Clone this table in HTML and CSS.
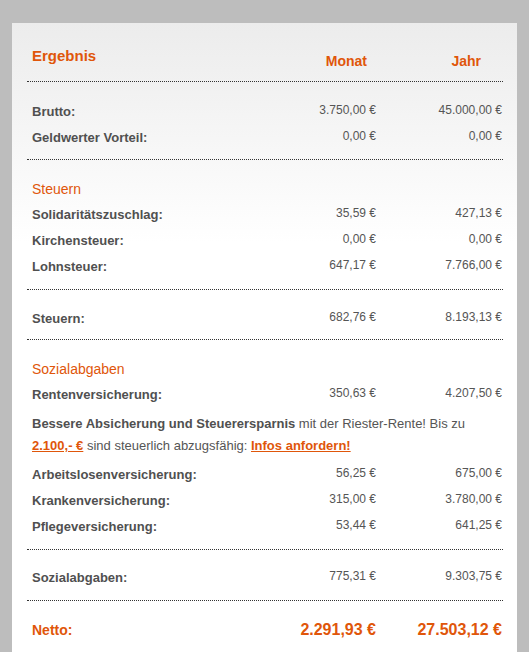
FILE: index.html
```html
<!DOCTYPE html>
<html lang="de">
<head>
    <meta charset="UTF-8">
    <meta name="viewport" content="width=device-width, initial-scale=1.0">
    <title>Ergebnis Brutto Netto</title>
    <link rel="stylesheet" href="styles.css">
</head>
<body>
    <div class="panel">
        <div class="row head">
            <div class="title">Ergebnis</div>
            <div class="col-head monat">Monat</div>
            <div class="col-head jahr">Jahr</div>
        </div>
        <hr class="dots first">

        <div class="block top">
            <div class="row"><div class="label">Brutto:</div><div class="val">3.750,00 €</div><div class="val">45.000,00 €</div></div>
            <div class="row"><div class="label">Geldwerter Vorteil:</div><div class="val">0,00 €</div><div class="val">0,00 €</div></div>
        </div>
        <hr class="dots">

        <div class="block">
            <h3 class="section">Steuern</h3>
            <div class="row"><div class="label">Solidaritätszuschlag:</div><div class="val">35,59 €</div><div class="val">427,13 €</div></div>
            <div class="row"><div class="label">Kirchensteuer:</div><div class="val">0,00 €</div><div class="val">0,00 €</div></div>
            <div class="row"><div class="label">Lohnsteuer:</div><div class="val">647,17 €</div><div class="val">7.766,00 €</div></div>
        </div>
        <hr class="dots">

        <div class="block sum">
            <div class="row"><div class="label">Steuern:</div><div class="val">682,76 €</div><div class="val">8.193,13 €</div></div>
        </div>
        <hr class="dots short">

        <div class="block">
            <h3 class="section">Sozialabgaben</h3>
            <div class="row"><div class="label">Rentenversicherung:</div><div class="val">350,63 €</div><div class="val">4.207,50 €</div></div>
            <p class="hint"><b>Bessere Absicherung und Steuerersparnis</b> mit der Riester-Rente! Bis zu <a href="#">2.100,- €</a> sind steuerlich abzugsfähig: <a href="#">Infos anfordern!</a></p>
            <div class="row"><div class="label">Arbeitslosenversicherung:</div><div class="val">56,25 €</div><div class="val">675,00 €</div></div>
            <div class="row"><div class="label">Krankenversicherung:</div><div class="val">315,00 €</div><div class="val">3.780,00 €</div></div>
            <div class="row"><div class="label">Pflegeversicherung:</div><div class="val">53,44 €</div><div class="val">641,25 €</div></div>
        </div>
        <hr class="dots">

        <div class="block sum2">
            <div class="row"><div class="label">Sozialabgaben:</div><div class="val">775,31 €</div><div class="val">9.303,75 €</div></div>
        </div>
        <hr class="dots">

        <div class="block netto">
            <div class="row"><div class="label">Netto:</div><div class="val">2.291,93 €</div><div class="val">27.503,12 €</div></div>
        </div>
    </div>
</body>
</html>
```

FILE: styles.css
```css
body {
    margin: 0;
    background-color: #bdbdbd;
    font-family: Arial, "Liberation Sans", sans-serif;
    color: #555;
}
.panel {
    margin: 23px 12px 0 12px;
    padding: 23px 14px 30px 15px;
    background: linear-gradient(#ececec, #ffffff 220px);
}
.row {
    display: grid;
    grid-template-columns: 1fr 120px 126px;
    padding: 0 1px 0 5px;
    height: 26px;
    align-items: start;
}
.label {
    font-size: 13px;
    font-weight: bold;
    line-height: 26px;
    color: #505050;
}
.val {
    font-size: 12px;
    line-height: 23px;
    text-align: right;
    white-space: nowrap;
}

/* Kopfzeile */
.head {
    height: 25px;
}
.title {
    font-size: 15px;
    font-weight: bold;
    line-height: 20px;
    color: #e0560a;
}
.col-head {
    font-size: 14px;
    font-weight: bold;
    line-height: 20px;
    padding-top: 5px;
    text-align: right;
    color: #e0560a;
}
.monat {
    padding-right: 9px;
}
.jahr {
    padding-right: 21px;
}

hr.dots {
    border: 0;
    border-top: 1px dotted #333;
    margin: 9px 0 0 0;
    height: 0;
}
hr.first {
    margin-top: 10px;
}
.block {
    padding-top: 19px;
}
.block.top {
    padding-top: 17px;
}
.block.top + hr.dots {
    margin-top: 8px;
}
.block.sum {
    padding-top: 16px;
}
hr.short {
    margin-top: 7px;
}
.block.sum2 {
    padding-top: 15px;
}
.section {
    margin: 0 0 3px 0;
    padding-left: 5px;
    font-size: 14px;
    font-weight: normal;
    line-height: 20px;
    color: #e0560a;
}
.hint {
    margin: 5px 0 5px 0;
    padding-left: 5px;
    font-size: 13px;
    line-height: 22px;
    color: #555;
}
.hint b {
    color: #505050;
}
.hint a {
    color: #e0560a;
    font-weight: bold;
}
.block.netto {
    padding-top: 16px;
}
.netto .label {
    font-size: 14px;
    color: #e0560a;
}
.netto .val {
    font-size: 16px;
    font-weight: bold;
    line-height: 25px;
    color: #e0560a;
}
```
